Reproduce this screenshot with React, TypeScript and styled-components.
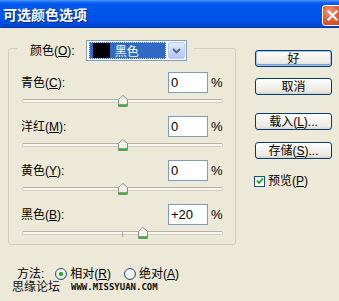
import React from "react";
import styled, { createGlobalStyle } from "styled-components";

const Global = createGlobalStyle`
  html, body { margin: 0; padding: 0; background: #ECE9D8; }
  body {
    font-family: "Liberation Sans", "Noto Sans CJK SC", sans-serif;
    font-size: 12px;
    color: #000;
    overflow: hidden;
  }
  u { text-decoration-thickness: 1px; text-underline-offset: 1px; }
`;

const Window = styled.div`
  position: relative;
  width: 339px;
  height: 301px;
  background: #ECE9D8;
  overflow: hidden;
  display: flex;
  flex-direction: column;
`;

const TitleBar = styled.div`
  flex: none;
  height: 28px;
  padding-left: 3px;
  display: flex;
  align-items: center;
  justify-content: space-between;
  overflow: hidden;
  background: linear-gradient(
    to bottom,
    #4C9BFF 0px,
    #1C6CF5 2px,
    #0058EE 4px,
    #0055EA 45%,
    #004FE2 80%,
    #0046D4 92%,
    #0036A8 100%
  );
`;

const Title = styled.span`
  color: #fff;
  font-family: "Noto Sans CJK SC", sans-serif;
  font-weight: 700;
  font-size: 14px;
  line-height: 1;
  text-shadow: 1px 1px 0 #0B2A80;
`;

const CloseButton = styled.div`
  flex: none;
  width: 21px;
  height: 21px;
  margin-right: -4px;
  margin-top: 3px;
  box-sizing: border-box;
  border: 1px solid #fff;
  border-radius: 3px;
  background: radial-gradient(circle at 35% 30%, #F29A7E 0%, #E0603E 45%, #C8401F 100%);
  display: flex;
  align-items: center;
  justify-content: center;
`;

const Body = styled.div`
  flex: 1;
  display: flex;
`;

const LeftColumn = styled.div`
  width: 237px;
  padding-left: 8px;
  box-sizing: border-box;
  display: flex;
  flex-direction: column;
`;

const Group = styled.div`
  margin-top: 20px;
  width: 228px;
  height: 197px;
  box-sizing: border-box;
  border: 1px solid #D0D0BF;
  border-radius: 3px;
  display: flex;
  flex-direction: column;
`;

const Legend = styled.div`
  margin: -9px 0 0 8px;
  padding: 0 7px 0 13px;
  width: fit-content;
  height: 21px;
  background: #ECE9D8;
  display: flex;
  align-items: center;
  gap: 11px;
`;

const Label = styled.span`
  white-space: nowrap;
  line-height: 1;
`;

const Select = styled.div`
  width: 101px;
  height: 21px;
  box-sizing: border-box;
  border: 1px solid #7F9DB9;
  background: #fff;
  padding: 1px;
  display: flex;
  align-items: stretch;
  gap: 2px;
`;

const Selected = styled.div`
  flex: 1;
  box-sizing: border-box;
  background: #316AC5;
  outline: 1px dotted #E8E0A8;
  outline-offset: -1px;
  display: flex;
  align-items: center;
  padding-left: 4px;
  gap: 5px;
  color: #fff;
  margin: 0 0 0 1px;
`;

const Swatch = styled.div`
  width: 17px;
  align-self: stretch;
  margin: 1px 0;
  background: #000;
`;

const DropButton = styled.div`
  width: 17px;
  box-sizing: border-box;
  border: 1px solid #BBCDF7;
  border-radius: 2px;
  background: linear-gradient(to bottom, #E2EBFE 0%, #C9D8FB 50%, #B3C8F6 100%);
  display: flex;
  align-items: center;
  justify-content: center;
`;

const Rows = styled.div`
  margin-top: 11px;
  padding-left: 12px;
  display: flex;
  flex-direction: column;
`;

const RowHead = styled.div`
  height: 21px;
  display: grid;
  grid-template-columns: 147px 40px auto;
  align-items: center;
`;

const NumberBox = styled.div`
  height: 21px;
  box-sizing: border-box;
  border: 1px solid #7F9DB9;
  background: #fff;
  font-size: 13px;
  padding-left: 2px;
  display: flex;
  align-items: center;
`;

const Percent = styled.span`
  margin-left: 3px;
  font-size: 13px;
  line-height: 1;
`;

const Slider = styled.div`
  position: relative;
  margin-left: 1px;
  width: 201px;
  height: 23px;
`;

const Track = styled.div`
  position: absolute;
  left: 0;
  right: 0;
  top: 6px;
  height: 4px;
  box-sizing: border-box;
  border: 1px solid #CFCCBD;
  border-top-color: #B4B1A2;
  border-radius: 2px;
  background: #F7F6F0;
`;

const Tick = styled.div`
  position: absolute;
  left: 100px;
  top: 7px;
  width: 1px;
  height: 5px;
  background: #A7A496;
`;

const Thumb = styled.svg`
  position: absolute;
  top: 2px;
  width: 10px;
  height: 12px;
`;

const MethodRow = styled.div`
  margin-top: 21px;
  margin-left: 9px;
  height: 16px;
  display: flex;
  align-items: center;
`;

const MethodLabel = styled.span`
  margin-right: 11px;
  line-height: 1;
`;

const RadioOption = styled.label`
  display: flex;
  align-items: center;
  gap: 3px;
  margin-right: 13px;
  line-height: 1;
`;

const RadioCircle = styled.span<{ $checked?: boolean }>`
  width: 12px;
  height: 12px;
  box-sizing: border-box;
  border-radius: 50%;
  border: 1px solid #1C5180;
  background: radial-gradient(circle at 40% 35%, #FFFFFF 0%, #EDEBE3 60%, #D4D1C6 100%);
  display: flex;
  align-items: center;
  justify-content: center;
  &::after {
    content: "";
    display: ${(p) => (p.$checked ? "block" : "none")};
    width: 4px;
    height: 4px;
    border-radius: 50%;
    background: #2AA52A;
    box-shadow: 0 0 1px #5CCB5C;
  }
`;

const RightColumn = styled.div`
  flex: 1;
  padding-top: 22px;
  padding-left: 18px;
  display: flex;
  flex-direction: column;
  align-items: flex-start;
`;

const Button = styled.div<{ $default?: boolean; $gap: number }>`
  margin-top: ${(p) => p.$gap}px;
  width: 77px;
  height: 17px;
  box-sizing: border-box;
  border: 1px solid #003C74;
  border-radius: 3px;
  background: linear-gradient(to bottom, #FFFFFF 0%, #F4F3EE 40%, #ECEAE3 80%, #D8D3C7 100%);
  box-shadow: ${(p) =>
    p.$default ? "inset 0 0 0 1px #A6BEEC, inset 0 -1px 0 1px #7C9CDB" : "none"};
  display: flex;
  align-items: center;
  justify-content: center;
  line-height: 1;
  white-space: nowrap;
`;

const CheckRow = styled.div`
  margin-top: 16px;
  margin-left: -1px;
  display: flex;
  align-items: center;
  gap: 3px;
  line-height: 1;
`;

const CheckBox = styled.span`
  width: 11px;
  height: 11px;
  box-sizing: border-box;
  border: 1px solid #1C5180;
  background: linear-gradient(135deg, #E6E5DE 0%, #FFFFFF 100%);
  display: flex;
  align-items: center;
  justify-content: center;
`;

const Watermark = styled.div`
  position: absolute;
  left: 12px;
  top: 280px;
  display: flex;
  align-items: center;
  gap: 11px;
  pointer-events: none;
`;

const WatermarkCn = styled.span`
  font-family: "Noto Sans CJK SC", sans-serif;
  font-size: 12px;
  line-height: 12px;
  color: #111;
`;

const WatermarkUrl = styled.span`
  font-family: "DejaVu Sans Mono", monospace;
  font-weight: 700;
  font-size: 9px;
  line-height: 1;
  color: #111;
  margin-top: 2px;
`;

type RowDef = { name: string; key: string; value: number };

const rows: RowDef[] = [
  { name: "青色", key: "C", value: 0 },
  { name: "洋红", key: "M", value: 0 },
  { name: "黄色", key: "Y", value: 0 },
  { name: "黑色", key: "B", value: 20 },
];

const ThumbIcon: React.FC<{ value: number }> = ({ value }) => (
  <Thumb viewBox="0 0 10 12" style={{ left: `${value + 100 - 4.5}px` }}>
    <path d="M0.5 4.5 L5 0.5 L9.5 4.5 V11.5 H0.5 Z" fill="#F4F3EE" stroke="#8A8A80" strokeWidth="1" />
    <rect x="1" y="9.2" width="8" height="2" fill="#3BB03B" />
    <path d="M1.5 5 L5 1.8" stroke="#FFFFFF" strokeWidth="1" />
  </Thumb>
);

const ColorRow: React.FC<{ row: RowDef }> = ({ row }) => (
  <div>
    <RowHead>
      <Label>
        {row.name}(<u>{row.key}</u>):
      </Label>
      <NumberBox>{row.value > 0 ? `+${row.value}` : `${row.value}`}</NumberBox>
      <Percent>%</Percent>
    </RowHead>
    <Slider>
      <Track />
      <Tick />
      <ThumbIcon value={row.value} />
    </Slider>
  </div>
);

export default function App() {
  return (
    <>
      <Global />
      <Window>
        <TitleBar>
          <Title>可选颜色选项</Title>
          <CloseButton>
            <svg width="13" height="13" viewBox="0 0 13 13">
              <path d="M2.5 2.5 L10.5 10.5 M10.5 2.5 L2.5 10.5" stroke="#fff" strokeWidth="2.2" strokeLinecap="square" />
            </svg>
          </CloseButton>
        </TitleBar>
        <Body>
          <LeftColumn>
            <Group>
              <Legend>
                <Label>
                  颜色(<u>O</u>):
                </Label>
                <Select>
                  <Selected>
                    <Swatch />
                    <span>黑色</span>
                  </Selected>
                  <DropButton>
                    <svg width="9" height="6" viewBox="0 0 9 6">
                      <path d="M1 1 L4.5 4.5 L8 1" fill="none" stroke="#4D6185" strokeWidth="1.8" />
                    </svg>
                  </DropButton>
                </Select>
              </Legend>
              <Rows>
                {rows.map((r) => (
                  <ColorRow key={r.key} row={r} />
                ))}
              </Rows>
            </Group>
            <MethodRow>
              <MethodLabel>方法:</MethodLabel>
              <RadioOption>
                <RadioCircle $checked />
                <span>
                  相对(<u>R</u>)
                </span>
              </RadioOption>
              <RadioOption>
                <RadioCircle />
                <span>
                  绝对(<u>A</u>)
                </span>
              </RadioOption>
            </MethodRow>
          </LeftColumn>
          <RightColumn>
            <Button $default $gap={0}>好</Button>
            <Button $gap={11}>取消</Button>
            <Button $gap={18}>
              <span>
                载入(<u>L</u>)...
              </span>
            </Button>
            <Button $gap={12}>
              <span>
                存储(<u>S</u>)...
              </span>
            </Button>
            <CheckRow>
              <CheckBox>
                <svg width="8" height="8" viewBox="0 0 8 8">
                  <path d="M1 3.5 L3 5.8 L7 1.5" fill="none" stroke="#21A121" strokeWidth="1.8" />
                </svg>
              </CheckBox>
              <span>
                预览(<u>P</u>)
              </span>
            </CheckRow>
          </RightColumn>
        </Body>
        <Watermark>
          <WatermarkCn>思缘论坛</WatermarkCn>
          <WatermarkUrl>WWW.MISSYUAN.COM</WatermarkUrl>
        </Watermark>
      </Window>
    </>
  );
}
